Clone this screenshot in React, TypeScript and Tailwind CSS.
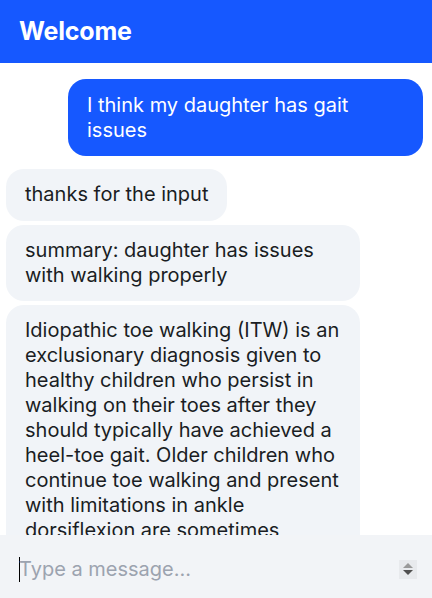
import React, { useState } from 'react';

interface Message {
    id: number;
    from: 'user' | 'bot';
    text: string;
}

const messages: Message[] = [
    { id: 1, from: 'user', text: 'I think my daughter has gait issues' },
    { id: 2, from: 'bot', text: 'thanks for the input' },
    { id: 3, from: 'bot', text: 'summary: daughter has issues with walking properly' },
    {
        id: 4,
        from: 'bot',
        text: 'Idiopathic toe walking (ITW) is an exclusionary diagnosis given to healthy children who persist in walking on their toes after they should typically have achieved a heel-toe gait. Older children who continue toe walking and present with limitations in ankle dorsiflexion are sometimes treated with serial casting or surgery.',
    },
];

export default function App() {
    const [draft, setDraft] = useState('');

    return (
        <div className="h-screen flex flex-col bg-white font-['Inter','Noto_Sans',sans-serif]">
            <header className="h-[63px] shrink-0 flex items-center px-[19px] bg-[#1658ff]">
                <h1 className="text-[25px] font-bold text-white tracking-[-0.2px]">Welcome</h1>
            </header>

            <div className="flex-1 overflow-hidden flex flex-col pt-4 pl-[6px] pr-[9px]">
                {messages.map((m) => (
                    <div
                        key={m.id}
                        className={
                            m.from === 'user'
                                ? 'self-end max-w-[355px] bg-[#1658ff] text-white rounded-[18px] px-[19px] py-[13.5px] text-[20px] leading-[25px] mb-[13px] shrink-0'
                                : 'self-start max-w-[354px] bg-[#f1f4f8] text-[#1a1d23] rounded-[18px] px-[19px] pt-[13px] pb-[13.5px] text-[20px] leading-[25px] mb-1 shrink-0'
                        }
                    >
                        {m.text}
                    </div>
                ))}
            </div>

            <div className="h-[63px] shrink-0 bg-[#f2f4f7] flex items-center pl-[19px] pr-[15px] pt-[5px]">
                <div className="w-px h-[25px] bg-black shrink-0" />
                <input
                    value={draft}
                    onChange={(e) => setDraft(e.target.value)}
                    placeholder="Type a message..."
                    className="flex-1 -ml-px bg-transparent outline-none text-[20px] leading-[25px] h-[25px] text-[#1a1d23] placeholder:text-[#9ca3af]"
                />
                <div className="w-[18px] h-[19px] bg-[#e8eaed] flex flex-col items-center justify-center gap-[2px]">
                    <div className="w-0 h-0 border-l-[5px] border-r-[5px] border-b-[5px] border-l-transparent border-r-transparent border-b-[#9a9a9a]" />
                    <div className="w-0 h-0 border-l-[5px] border-r-[5px] border-t-[5px] border-l-transparent border-r-transparent border-t-[#505050]" />
                </div>
            </div>
        </div>
    );
}
